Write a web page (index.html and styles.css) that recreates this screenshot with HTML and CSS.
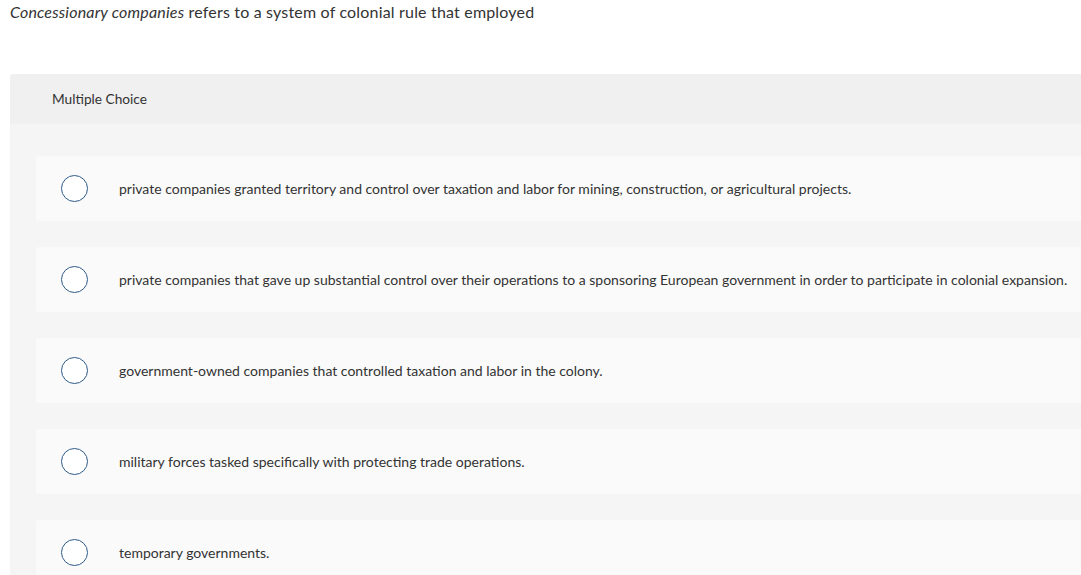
FILE: index.html
```html
<!DOCTYPE html>
<html lang="en">
<head>
<meta charset="utf-8">
<title>Multiple Choice</title>
<link rel="stylesheet" href="styles.css">
</head>
<body>
<p class="question"><em>Concessionary companies</em> refers to a system of colonial rule that employed</p>
<section class="panel">
  <div class="panel-header">Multiple Choice</div>
  <div class="options">
    <label class="option"><span class="radio"></span><span class="opt-text">private companies granted territory and control over taxation and labor for mining, construction, or agricultural projects.</span></label>
    <label class="option"><span class="radio"></span><span class="opt-text">private companies that gave up substantial control over their operations to a sponsoring European government in order to participate in colonial expansion.</span></label>
    <label class="option"><span class="radio"></span><span class="opt-text">government-owned companies that controlled taxation and labor in the colony.</span></label>
    <label class="option"><span class="radio"></span><span class="opt-text">military forces tasked specifically with protecting trade operations.</span></label>
    <label class="option"><span class="radio"></span><span class="opt-text">temporary governments.</span></label>
  </div>
</section>
</body>
</html>
```
FILE: styles.css
```css
html, body {
  margin: 0;
  padding: 0;
  background: #ffffff;
  overflow: hidden;
}
body {
  font-family: "Lato", "Open Sans", sans-serif;
  color: #333333;
  padding: 0 0 0 10px;
}
.question {
  margin: 0;
  padding-top: 3px;
  font-size: 16px;
  line-height: 18px;
  letter-spacing: 0.18px;
  color: #333333;
}
.panel {
  margin-top: 53px;
  background: #f5f5f5;
  border-radius: 3px 0 0 0;
}
.panel-header {
  height: 50px;
  box-sizing: border-box;
  padding-bottom: 2px;
  display: flex;
  align-items: center;
  padding-left: 42px;
  background: #f0f0f0;
  font-size: 13.7px;
  color: #333333;
  border-radius: 3px 0 0 0;
}
.options {
  display: flex;
  flex-direction: column;
  gap: 26px;
  padding: 32px 0 0 26px;
}
.option {
  height: 65px;
  display: flex;
  align-items: center;
  background: #fafafa;
  border-radius: 3px 0 0 3px;
  padding-left: 25px;
  cursor: pointer;
}
.radio {
  flex: none;
  width: 25px;
  height: 25px;
  border: 1.5px solid #2d5b8a;
  border-radius: 50%;
  background: #ffffff;
}
.opt-text {
  margin-left: 31px;
  font-size: 14px;
  color: #333333;
  white-space: nowrap;
}
```
